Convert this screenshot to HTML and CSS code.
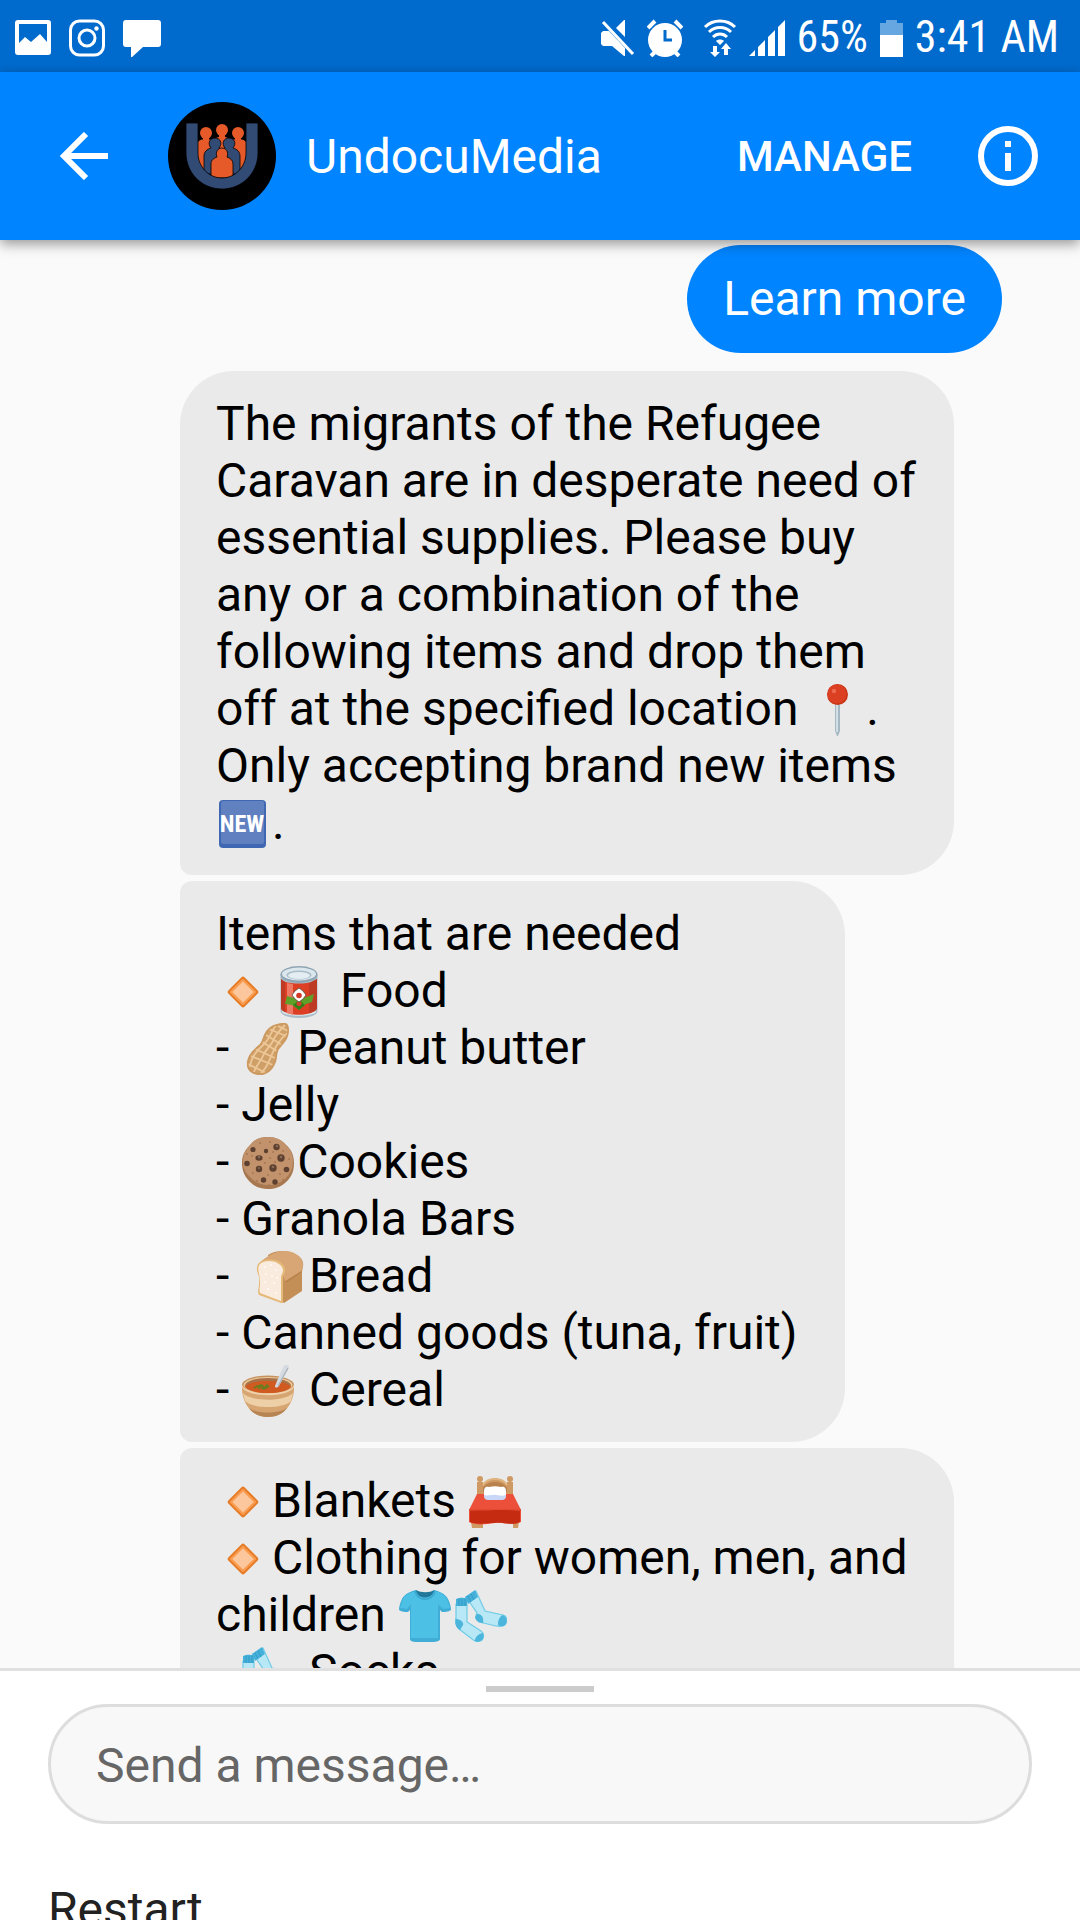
FILE: index.html
```html
<!DOCTYPE html>
<html lang="en">
<head>
    <meta charset="UTF-8">
    <meta name="viewport" content="width=device-width, initial-scale=1.0">
    <title>UndocuMedia</title>
    <link rel="stylesheet" href="styles.css">
</head>
<body>
    <!-- Emoji drawings, reused in the messages -->
    <svg class="sprites" aria-hidden="true">
        <symbol id="diamond" viewBox="0 0 52 52">
            <rect x="14.500" y="14.500" width="23" height="23" rx="2.500" transform="rotate(45 26 26)" fill="#e67c27"/>
            <rect x="16.500" y="16.500" width="19" height="19" rx="1" transform="rotate(45 26 26)" fill="#fa9c50"/>
            <rect x="18.500" y="18.500" width="15" height="15" transform="rotate(45 26 26)" fill="#fcc79c"/>
        </symbol>
        <symbol id="can" viewBox="0 0 52 52">
            <path d="M7.500 8v37c0 4 8 7 18.500 7s18.500-3 18.500-7V8z" fill="#a9bcc7"/>
            <path d="M9 43c2 5 32 5 34 0v3c-3 5-31 5-34 0z" fill="#dbe6ec"/>
            <path d="M8 13c3 6 33 6 36 0v29c-2 9-34 9-36 0z" fill="#dc3f23"/>
            <path d="M8 13l4 3v30c-3-1-4-3-4-4zM44 13l-8 4v30c5-1 8-3 8-5z" fill="#bd3b25"/>
            <path d="M14 17l6 1v31l-6-2z" fill="#ee7a66"/>
            <ellipse cx="26" cy="8.500" rx="18.500" ry="8.500" fill="#8fa5b3"/>
            <ellipse cx="26" cy="8" rx="17" ry="6.500" fill="#dce7ed"/>
            <ellipse cx="26" cy="9" rx="12.500" ry="4.500" fill="#a9bdca"/>
            <ellipse cx="26" cy="9.500" rx="11" ry="3.500" fill="#e4edf1"/>
            <path d="M12 38l2-8 7 2 5 5 5-5 10-4-2 8-6 2-7 6-7-5z" fill="#5fa128"/>
            <path d="M26 34l6 5-6 5-6-5z" fill="#377d18"/>
            <circle cx="26" cy="37.500" r="2.500" fill="#d7402a"/>
            <path d="M26 22l4 3 3 4-3 4-4 3-4-3-3-4 3-4z" fill="#fff" stroke="#3b4b35" stroke-width=".7"/>
            <circle cx="26" cy="29.500" r="2.800" fill="#cf3b26"/>
        </symbol>
        <symbol id="peanut" viewBox="0 0 52 52">
            <path d="M39 0c6-1 8 1 8 7 0 8-4 12-8 17-5 5-3 9-5 15-3 8-9 14-18 13C8 51 4 46 5 39c1-8 7-13 12-17 4-4 3-8 7-14 4-5 9-7 15-8z" fill="#cf9f68"/>
            <g fill="none" stroke="#edc798" stroke-width="1.800">
                <path d="M43 2c-6 6-10 10-12 16-3 6-8 9-10 15-2 5-7 10-9 16"/>
                <path d="M34 2c-5 7-6 13-11 18C16 27 9 33 8 44M46 10c-8 5-11 12-14 17-4 7-5 16-13 23"/>
                <path d="M27 6l17 7M24 12l16 10M20 19l15 9M13 26l20 9M9 33l22 9M6 41l18 9M36 3l10 5"/>
            </g>
            <path d="M39 1c5-1 7 1 7 6 0 8-4 11-8 16-5 5-3 9-5 15-3 8-8 14-17 13-7-1-11-5-10-12 1-8 7-13 12-17 4-4 3-8 7-13 4-6 8-7 14-8z" fill="none" stroke="#cb975c" stroke-width="1.200"/>
        </symbol>
        <symbol id="cookie" viewBox="0 0 52 52">
            <path d="M26 0c8 0 14 3 18 8 5 4 8 10 8 18 0 9-3 15-9 20-5 4-10 6-17 6s-13-2-18-7C3 40 0 34 0 26 0 17 4 12 9 7c4-5 9-7 17-7z" fill="#a87850"/>
            <path d="M26 0c8 0 14 3 18 8 4 4 7 9 7 16 0 8-3 13-8 18-5 4-10 6-17 6-8 0-13-3-18-8-4-4-7-8-7-15C1 17 4 12 9 7c4-5 9-7 17-7z" fill="#c1926b"/>
            <g fill="#a77750">
                <circle cx="18" cy="6" r="1"/><circle cx="28" cy="5" r="1"/><circle cx="41" cy="14" r="1"/><circle cx="28" cy="21" r="1"/>
                <circle cx="10" cy="19" r="1"/><circle cx="11" cy="36" r="1"/><circle cx="26" cy="38" r="1"/><circle cx="38" cy="37" r="1"/>
                <circle cx="33" cy="25" r="1"/><circle cx="23" cy="26" r="1"/><circle cx="47" cy="22" r="1"/><circle cx="15" cy="44" r="1"/>
                <circle cx="27" cy="48" r="1"/><circle cx="41" cy="43" r="1"/><circle cx="31" cy="15" r="1"/><circle cx="5" cy="17" r="1"/>
            </g>
            <g fill="#5d4030">
                <circle cx="11" cy="12.500" r="2.600"/><circle cx="34.500" cy="10" r="3.200"/><circle cx="24" cy="14" r="2.200"/>
                <ellipse cx="17" cy="21" rx="3.600" ry="2.800"/><circle cx="39" cy="21" r="3.700"/><circle cx="5" cy="26.500" r="2.800"/>
                <circle cx="17" cy="32" r="3.200"/><circle cx="31" cy="31" r="3.700"/><circle cx="44.500" cy="32.500" r="2.800"/>
                <circle cx="21.500" cy="43" r="2.700"/><circle cx="33" cy="45" r="2.700"/>
            </g>
            <g fill="#8a6a55">
                <circle cx="35" cy="9" r="1.200"/><circle cx="17" cy="20" r="1.200"/><circle cx="39" cy="20" r="1.300"/><circle cx="31" cy="30" r="1.300"/><circle cx="17" cy="31" r="1"/>
            </g>
        </symbol>
        <symbol id="bread" viewBox="0 0 52 52">
            <path d="M14 4C21-1 34-1 41 3c6 3 9 7 8 12l-1 6v19L30 52 16 40V14z" fill="#c48f57"/>
            <path d="M4 14C8 8 20 0 31 0c9 0 18 6 18 13 0 4-1 6-3 8L31 30 26 16z" fill="#d8a674"/>
            <path d="M5 12c7-7 25-4 26 6 1 5-2 5-2 9v25L27 52 5 44c-2-3 0-7 0-11s1-6-1-10c-2-5-1-9 1-11z" fill="#e5b977"/>
            <path d="M6 13c6-6 22-3 23 6 0 4-2 4-2 8v23L6 42c-1-3 0-5 0-9s0-6-1-10c-1-4-1-8 1-10z" fill="#f9ecdf"/>
            <g fill="#fffaf4">
                <circle cx="11" cy="16" r="1"/><circle cx="17" cy="14" r="1"/><circle cx="22" cy="19" r="1"/><circle cx="12" cy="23" r="1"/><circle cx="18" cy="25" r="1"/>
                <circle cx="11" cy="31" r="1"/><circle cx="20" cy="32" r="1"/><circle cx="14" cy="38" r="1"/><circle cx="22" cy="42" r="1"/><circle cx="23" cy="27" r="1"/>
            </g>
            <path d="M32 31l15-10" stroke="#b57f49" stroke-width="1.200"/>
        </symbol>
        <symbol id="bowl" viewBox="0 0 52 52">
            <ellipse cx="26" cy="20" rx="26" ry="9.500" fill="#c5925f"/>
            <ellipse cx="26" cy="20" rx="24.500" ry="8" fill="#edc99b"/>
            <ellipse cx="26" cy="20.500" rx="23" ry="7.500" fill="#a87147"/>
            <path d="M0 20c4 11 48 11 52 0 1 16-8 32-26 32S-1 36 0 20z" fill="#d6a572"/>
            <path d="M1 28c8 9 42 9 50 0l-2 8c-8 8-38 8-46 0z" fill="#edcfa8"/>
            <path d="M7 43c8 6 30 6 38 0-4 6-11 9-19 9S11 49 7 43z" fill="#b78453"/>
            <path d="M0 20c4 11 48 11 52 0v2c-5 11-47 11-52 0z" fill="#f0d3ac"/>
            <path d="M3 22c6-8 40-8 46 0-7 8-39 8-46 0z" fill="#d15a20"/>
            <path d="M12 23l3-2 2 2 3-3 2 3 3-3 2 2M16 21l3-1 2 1M19 23l3 1 4-2" fill="none" stroke="#6a7d20" stroke-width="1.600"/>
            <path d="M33 21L41 2c2-3 6-2 6 0L37 21c-2 2-4 2-4 0z" fill="#d5dbe1"/>
            <path d="M36 21L46 3" stroke="#a8b2bc" stroke-width="1.300"/>
        </symbol>
        <symbol id="bed" viewBox="0 0 52 52">
            <g fill="#cf9964">
                <path d="M8 6h6v46H8zM38 6h6v15h-6zM2 46h6v6H3zM44 46h6l-1 6h-5z"/>
                <circle cx="11" cy="3" r="3"/><circle cx="41" cy="3" r="3"/>
                <path d="M14 9c5-9 19-9 24 0v14H14z"/>
            </g>
            <path d="M14 12c5-8 19-8 24 0v4H14z" fill="#b9824c"/>
            <path d="M14 9c5-8 19-8 24 0" fill="none" stroke="#e1b480" stroke-width="2"/>
            <path d="M8 18h36l8 16v12c-8 4-18 0-26 1-9 1-18 3-26-1V34z" fill="#ec503b"/>
            <path d="M1 34h50v12c-8 4-16 0-25 1-9 0-18 2-25-1z" fill="#c42b10"/>
            <path d="M0 33h52v2c-9 0-16-2-26-1-8 1-17 0-26 1z" fill="#e24832"/>
            <rect x="15" y="11" width="22" height="13" rx="4" fill="#c8d7f8"/>
            <path d="M15 19c0-7 1-9 5-8 4-1 8-1 12 0 4-1 5 1 5 8-6 2-9-1-13 0-4 0-6 1-9 0z" fill="#fff"/>
        </symbol>
        <symbol id="shirt" viewBox="0 0 52 52">
            <path d="M17 0c5 5 14 5 18 0 8 2 12 5 14 9 2 4 3 8 3 11-3 2-6 2-9 2l-2-2v29c0 2-3 3-8 3H18c-5 0-7-1-7-3V20l-2 2c-3 0-6 0-9-2 0-3 1-7 3-11C5 5 9 2 17 0z" fill="#3fadd6"/>
            <path d="M17 1c5 8 14 8 18 0 6 1 11 4 13 8l3 9-7 1-5-5v34H12V14l-4 5-7-1 3-9C6 5 10 3 17 1z" fill="#4dc0e6"/>
            <path d="M17 0c5 3 14 3 18 0-1 10-17 10-18 0z" fill="#21789b"/>
            <path d="M16 1c2 11 18 11 20 0" fill="none" stroke="#38a6d0" stroke-width="1.500"/>
        </symbol>
        <symbol id="socks" viewBox="0 0 52 52">
            <path d="M11 7L21 1l9 20 18 4c5 1 5 9 0 11-2 1-5 0-7 0l-17-4c-4-3-3-8-2-9z" fill="#b8e7f6" stroke="#6fcbe6" stroke-width="1.200"/>
            <path d="M10 7L20 0l3 7-10 7z" fill="#45b1da"/>
            <path d="M22 24c4 0 7 2 6 9-4 0-8-3-8-6zM48 25c6 3 4 11-1 11-4 0-4-1-4-2 0-4 2-8 5-9z" fill="#4bb5dc"/>
            <path d="M1 14h11v18l14 9c4 3 3 9-1 10-4 2-6-1-8-2L4 39c-4-4-4-9-3-11z" fill="#b8e7f6" stroke="#6fcbe6" stroke-width="1.200"/>
            <path d="M1 9c4-2 8-1 11-1v8H1z" fill="#45b1da"/>
            <path d="M1 29c4 0 8 3 7 6l-3 5c-5-3-5-7-4-11zM28 43c2 6-3 10-8 8 0-4 3-7 8-8z" fill="#4bb5dc"/>
            <path d="M4 9v7M7 9v7M10 9v7M13 6l3 6M16 4l3 6" stroke="#2d94c0" stroke-width=".8"/>
        </symbol>
        <symbol id="pin" viewBox="0 0 52 52">
            <path d="M24 19h5v28l-2 5h-1l-2-5z" fill="#a4b9c4"/>
            <path d="M25 19h2v29h-2z" fill="#d3dfe5"/>
            <circle cx="26.500" cy="10.500" r="10.500" fill="#c93415"/>
            <circle cx="26" cy="10" r="9.500" fill="#dc4023"/>
            <circle cx="23" cy="7" r="2.200" fill="#ee6a4e"/>
        </symbol>
        <symbol id="new" viewBox="0 0 52 52">
            <rect x="2" y="2" width="47" height="48" rx="4" fill="#4068b2"/>
            <rect x="4" y="3" width="43" height="43" rx="2" fill="#6080bf"/>
            <text class="new-text" x="25" y="34" text-anchor="middle">NEW</text>
        </symbol>
    </svg>

    <div class="status-bar">
        <div class="status-left">
            <svg width="36" height="38" viewBox="0 0 36 38" fill="#fff">
                <path fill-rule="evenodd" d="M3 1h30a3 3 0 0 1 3 3v29a3 3 0 0 1-3 3H3a3 3 0 0 1-3-3V4a3 3 0 0 1 3-3zm1 4v19l6-6 6 5 9-8 7 8V5z"/>
            </svg>
            <svg width="36" height="38" viewBox="0 0 36 38" fill="none" stroke="#fff" stroke-width="3">
                <rect x="1.500" y="2" width="33" height="34" rx="9"/>
                <circle cx="18" cy="19" r="8"/>
                <circle cx="27.500" cy="9.500" r="2.200" fill="#fff" stroke="none"/>
            </svg>
            <svg width="38" height="38" viewBox="0 0 38 38" fill="#fff">
                <path d="M3 1h32a3 3 0 0 1 3 3v21a3 3 0 0 1-3 3H20L8 39V28H3a3 3 0 0 1-3-3V4a3 3 0 0 1 3-3z"/>
            </svg>
        </div>
        <div class="status-right">
            <svg width="34" height="38" viewBox="0 0 34 38" fill="#fff">
                <path d="M0 14l2-2h6l16 17v8h-1L11 27H2l-2-2zM15 9l8-8h1v17z"/>
                <path d="M2 3l30 32" stroke="#fff" stroke-width="3"/>
            </svg>
            <svg width="36" height="38" viewBox="0 0 36 38" fill="none" stroke="#fff">
                <circle cx="18" cy="21" r="17" fill="#fff" stroke="none"/>
                <path d="M1 9l7-7M35 9l-7-7M4 37l5-5M32 37l-5-5" stroke-width="4"/>
                <path d="M18 11v10h7" stroke="#006acd" stroke-width="3"/>
            </svg>
            <svg width="42" height="38" viewBox="0 0 42 38" fill="none" stroke="#fff" stroke-width="3">
                <path d="M10 8c8-8 22-8 30 0M14 13c6-6 16-6 22 0M18 18c4-4 10-4 14 0"/>
                <path d="M21 22c2-2 6-2 8 0l-4 4z" fill="#fff" stroke="none"/>
                <path d="M18 27h4v6h3l-5 5-5-5h3zM29 36v-6h-3l5-6 5 6h-3v6z" fill="#fff" stroke="none"/>
            </svg>
            <svg width="36" height="38" viewBox="0 0 36 38" fill="#fff">
                <path d="M0 37l6-6v6zM9 28l7-7v16H9zM19 18l7-7v26h-7zM29 8l7-7v36h-7z"/>
            </svg>
            <span>65%</span>
            <svg width="23" height="38" viewBox="0 0 23 38">
                <path d="M6 1h11v3h6v12H0V4h6z" fill="#66a6e1"/>
                <path d="M0 16h23v22H0z" fill="#fff"/>
            </svg>
            <span>3:41 AM</span>
        </div>
    </div>

    <header class="header">
        <button class="icon-btn" type="button" aria-label="Back">
            <svg width="48" height="48" viewBox="0 0 48 48" fill="none" stroke="#fff" stroke-width="6">
                <path d="M26 2L4 24l22 22M4 24h44"/>
            </svg>
        </button>
        <svg class="avatar" viewBox="0 0 108 108">
            <circle cx="54" cy="54" r="54" fill="#000"/>
            <g fill="#e55a28">
                <circle cx="38" cy="31" r="6"/><circle cx="54" cy="28" r="6"/><circle cx="70" cy="31" r="6"/>
                <path d="M30 40c2-4 14-4 16 0v30h-8c-5-4-8-10-8-17zM62 40c2-4 14-4 16 0v13c0 7-3 13-8 17h-8zM45 39c3-6 15-6 18 0v20H45z"/>
                <path d="M35 34h6v6h-6zM51 31h6v6h-6zM67 34h6v6h-6z"/>
            </g>
            <g fill="#324b75" stroke="#000" stroke-width=".8">
                <path d="M36 72V54c0-4 3-7 7-8-4-5-1-10 4-10s8 5 4 10c4 1 6 4 6 8v18zM51 72V54c0-4 2-7 6-8-4-5-1-10 4-10s8 5 4 10c4 1 7 4 7 8v18z"/>
            </g>
            <path d="M43 76V62c0-4 3-6 6-7-2-5 1-9 5-9s7 4 5 9c3 1 6 3 6 7v14z" fill="#e55a28" stroke="#000" stroke-width=".8"/>
            <path d="M18 21h12v30c0 14 11 25 24 25s24-11 24-25V21h12v30c0 20-16 36-36 36S18 71 18 51z" fill="#324b75" stroke="#000" stroke-width=".8"/>
        </svg>
        <h1>UndocuMedia</h1>
        <button class="manage-btn" type="button">MANAGE</button>
        <button class="icon-btn" type="button" aria-label="Info">
            <svg width="60" height="60" viewBox="0 0 60 60">
                <circle cx="30" cy="30" r="27" fill="none" stroke="#fff" stroke-width="6"/>
                <path d="M27 15h6v6h-6zM27 27h6v18h-6z" fill="#fff"/>
            </svg>
        </button>
    </header>

    <main class="chat">
        <p class="bubble sent">Learn more</p>

        <p class="bubble first">The migrants of the Refugee Caravan are in desperate need of essential supplies. Please buy any or a combination of the following items and drop them off at the specified location <svg class="emoji"><use href="#pin"/></svg>. Only accepting brand new items <svg class="emoji"><use href="#new"/></svg>.</p>

        <p class="bubble">Items that are needed<br>
            <svg class="emoji"><use href="#diamond"/></svg><svg class="emoji"><use href="#can"/></svg> Food<br>
            - <svg class="emoji"><use href="#peanut"/></svg>Peanut butter<br>
            - Jelly<br>
            - <svg class="emoji"><use href="#cookie"/></svg>Cookies<br>
            - Granola Bars<br>
            - &nbsp;<svg class="emoji"><use href="#bread"/></svg>Bread<br>
            - Canned goods (tuna, fruit)&nbsp;<br>
            - <svg class="emoji"><use href="#bowl"/></svg> Cereal</p>

        <p class="bubble"><svg class="emoji"><use href="#diamond"/></svg>Blankets <svg class="emoji"><use href="#bed"/></svg><br>
            <svg class="emoji"><use href="#diamond"/></svg>Clothing for women, men, and children <svg class="emoji"><use href="#shirt"/></svg><svg class="emoji"><use href="#socks"/></svg><br>
            - <svg class="emoji"><use href="#socks"/></svg> Socks</p>
    </main>

    <footer class="composer">
        <div class="handle"></div>
        <input type="text" class="message-input" placeholder="Send a message…" aria-label="Send a message">
        <div class="menu">
            <button class="menu-item" type="button">Restart</button>
        </div>
    </footer>
</body>
</html>
```
FILE: styles.css
```css
* {
    box-sizing: border-box;
}
body {
    display: flex;
    flex-direction: column;
    height: 100vh;
    margin: 0;
    overflow: hidden;
    background-color: #fafafa;
    color: #000;
    font-family: Roboto, sans-serif;
    font-size: 48px;
    line-height: 57px;
}
button {
    padding: 0;
    border: none;
    background: none;
    color: inherit;
    font: inherit;
    cursor: pointer;
}
svg {
    display: block;
    flex: none;
}
.sprites {
    position: absolute;
    width: 0;
    height: 0;
}
.status-bar {
    display: flex;
    flex: none;
    align-items: center;
    justify-content: space-between;
    height: 72px;
    padding: 3px 21px 0 15px;
    background-color: #006acd;
    color: #fff;
    font-family: "Roboto Condensed", Roboto, sans-serif;
    font-size: 44px;
}
.status-left {
    display: flex;
    gap: 18px;
}
.status-right {
    display: flex;
    align-items: center;
    gap: 12px;
}
.header {
    display: flex;
    flex: none;
    align-items: center;
    height: 168px;
    padding: 0 42px 0 60px;
    background-color: #0084ff;
    color: #fff;
    box-shadow: 0 4px 12px rgba(0, 0, 0, 0.4);
    z-index: 1;
}
.avatar {
    width: 108px;
    height: 108px;
    margin: 0 30px 0 60px;
}
h1 {
    flex: 1;
    margin: 0;
    font-size: 48px;
    font-weight: 400;
}
.manage-btn {
    margin-right: 66px;
    font-size: 42px;
    font-weight: 500;
}
.chat {
    display: flex;
    flex: 1;
    flex-direction: column;
    align-items: flex-start;
    gap: 6px;
    min-height: 0;
    padding: 5px 78px 0 180px;
    overflow: hidden;
}
.bubble {
    flex: none;
    margin: 0 48px 0 0;
    padding: 24px 36px;
    border-radius: 12px 54px 54px 12px;
    background-color: #eaeaea;
}
.bubble.first {
    border-top-left-radius: 54px;
}
.bubble.sent {
    align-self: flex-end;
    margin: 0 0 12px;
    padding: 25px 36px 26px;
    border-radius: 54px;
    background-color: #0084ff;
    color: #fff;
}
.emoji {
    display: inline-block;
    width: 52px;
    height: 52px;
    margin: 0 3px 0 1px;
    vertical-align: -11px;
}
.new-text {
    fill: #fff;
    font-family: "Roboto Condensed", Roboto, sans-serif;
    font-size: 24px;
    font-weight: 700;
}
.composer {
    flex: none;
    padding: 15px 48px 0;
    border-top: 3px solid #e0e0e0;
    background-color: #fff;
}
.handle {
    width: 108px;
    height: 6px;
    margin: 0 auto 12px;
    background-color: #ccc;
}
.message-input {
    display: block;
    width: 100%;
    height: 120px;
    padding: 2px 45px 0;
    border: 3px solid #ddd;
    border-radius: 60px;
    background-color: #f8f8f8;
    color: #000;
    font: inherit;
}
.message-input::placeholder {
    color: #666;
    opacity: 1;
}
/* Only the top of the menu shows until the sheet is pulled up */
.menu {
    height: 96px;
    padding-top: 57px;
    overflow: hidden;
    color: #222;
}
```
